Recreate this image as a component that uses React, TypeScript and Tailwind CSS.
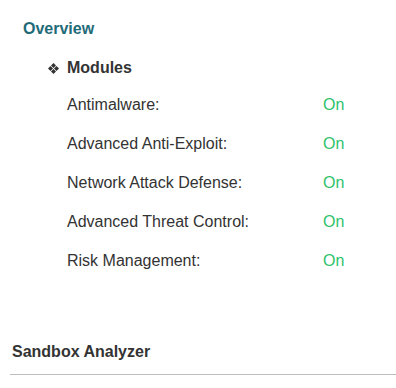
const modules = [
  { name: 'Antimalware:', status: 'On' },
  { name: 'Advanced Anti-Exploit:', status: 'On' },
  { name: 'Network Attack Defense:', status: 'On' },
  { name: 'Advanced Threat Control:', status: 'On' },
  { name: 'Risk Management:', status: 'On' },
]

function DiamondIcon() {
  return (
    <svg width="11" height="11" viewBox="0 0 11 11" className="text-[#333]">
      <path d="M5.5 0 L8 2.5 L5.5 5 L3 2.5 Z" fill="currentColor" />
      <path d="M2.5 3 L5 5.5 L2.5 8 L0 5.5 Z" fill="currentColor" />
      <path d="M8.5 3 L11 5.5 L8.5 8 L6 5.5 Z" fill="currentColor" />
      <path d="M5.5 6 L8 8.5 L5.5 11 L3 8.5 Z" fill="currentColor" />
    </svg>
  )
}

export default function App() {
  return (
    <div className="w-[396px] h-[388px] bg-white pt-[19px] font-['Liberation_Sans',Arial,sans-serif] text-[16px] text-[#333] overflow-hidden">
      <div className="ml-[23px] h-5 leading-5 font-bold text-[#1f6b78]">Overview</div>

      <div className="mt-[19px] ml-[48px] h-5 flex items-center gap-[8px]">
        <DiamondIcon />
        <span className="leading-5 font-bold">Modules</span>
      </div>

      <div className="mt-[7px] ml-[67px]">
        {modules.map((m) => (
          <div key={m.name} className="h-[39px] flex items-center">
            <span className="w-[256px]">{m.name}</span>
            <span className="text-[#2ec26a]">{m.status}</span>
          </div>
        ))}
      </div>

      <div className="mt-[62px] ml-[10px] pl-[2px] pb-[12px] border-b border-[#bdbdbd]">
        <div className="h-5 leading-5 font-bold">Sandbox Analyzer</div>
      </div>
    </div>
  )
}
